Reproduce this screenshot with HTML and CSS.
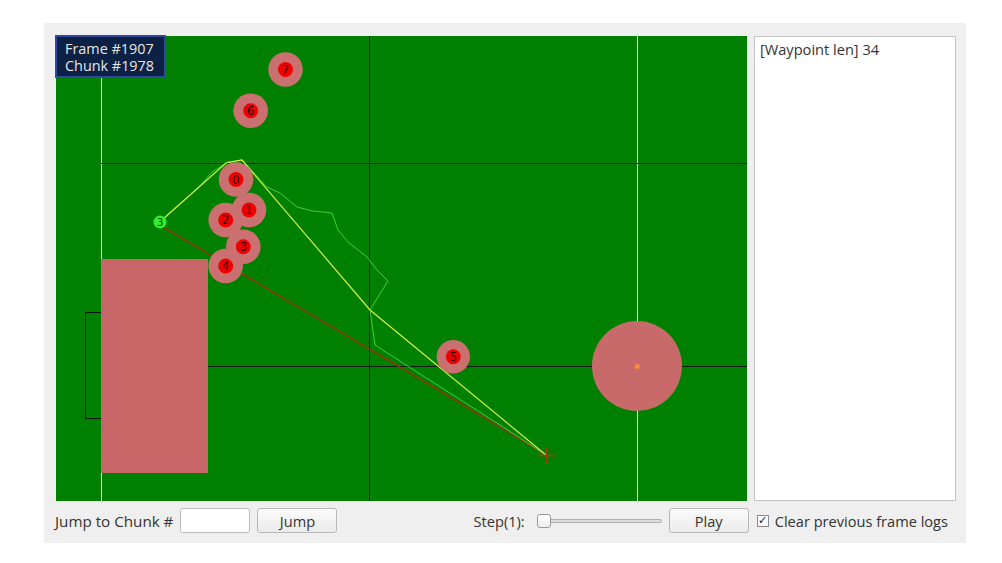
FILE: index.html
```html
<!DOCTYPE html>
<html>
<head>
<meta charset="utf-8">
<link rel="stylesheet" href="styles.css">
</head>
<body>
<div class="window">
  <div class="main">
    <div class="canvas">
      <svg class="field" width="691" height="465" viewBox="56 36 691 465" xmlns="http://www.w3.org/2000/svg">
        <rect x="56" y="36" width="691" height="465" fill="#008000"/>
        <!-- field lines -->
        <line x1="101.5" y1="36" x2="101.5" y2="501" stroke="#e8f8e8" stroke-width="1"/>
        <line x1="637.5" y1="36" x2="637.5" y2="501" stroke="#e8f8e8" stroke-width="1"/>
        <line x1="369.5" y1="36" x2="369.5" y2="501" stroke="#0a1a0a" stroke-width="1"/>
        <line x1="101" y1="163.5" x2="747" y2="163.5" stroke="#0a1a0a" stroke-width="1"/>
        <line x1="101" y1="366.5" x2="747" y2="366.5" stroke="#0a1a0a" stroke-width="1"/>
        <rect x="85.5" y="312.5" width="16" height="106" fill="none" stroke="#0a1a0a" stroke-width="1"/>
        <!-- zones -->
        <rect x="101" y="259" width="107" height="214" fill="#c66666"/>
        <circle cx="637" cy="366" r="45" fill="#c96a6a"/>
        <circle cx="637.3" cy="366.5" r="2.5" fill="#ff8a3a"/>
        <!-- paths -->
        <polyline points="163,227 420,379 500,427 546,455" fill="none" stroke="#8a3a10" stroke-width="1.6"/>
        <polyline points="160,222 200,186 212,172 228,162 242,160 267,187 280,193 297,207 313,211 332,213 338,230 348,242 367,257 377,270 388,281 370,310 375,345 420,374 500,425 546,455" fill="none" stroke="#36d336" stroke-width="1"/>
        <polyline points="163,219 226,163 242,160 370,310 546,455" fill="none" stroke="#d8ee40" stroke-width="1.2"/>
        <!-- target cross -->
        <line x1="538" y1="455.5" x2="555" y2="455.5" stroke="#a83818" stroke-width="1.6"/>
        <line x1="546.5" y1="447" x2="546.5" y2="464" stroke="#a83818" stroke-width="1.6"/>
        <!-- robots -->
        <g class="robots">
          <circle cx="285.5" cy="69.5" r="17.3" fill="#cb7070"/>
          <circle cx="285.5" cy="69.5" r="7.5" fill="#ee0000"/>
          <text x="285.5" y="73.5">7</text>
          <circle cx="250.7" cy="110.7" r="17.3" fill="#cb7070"/>
          <circle cx="250.7" cy="110.7" r="7.5" fill="#ee0000"/>
          <text x="250.7" y="114.7">6</text>
          <circle cx="236" cy="179.5" r="17.3" fill="#cb7070"/>
          <circle cx="249" cy="210" r="17.3" fill="#cb7070"/>
          <circle cx="225.7" cy="220" r="17.3" fill="#cb7070"/>
          <circle cx="243.3" cy="246.7" r="17.3" fill="#cb7070"/>
          <circle cx="225.7" cy="266" r="17.3" fill="#cb7070"/>
          <circle cx="236" cy="179.5" r="7.5" fill="#ee0000"/>
          <text x="236" y="183.5">0</text>
          <circle cx="249" cy="210" r="7.5" fill="#ee0000"/>
          <text x="249" y="214">1</text>
          <circle cx="225.7" cy="220" r="7.5" fill="#ee0000"/>
          <text x="225.7" y="224">2</text>
          <circle cx="243.3" cy="246.7" r="7.5" fill="#ee0000"/>
          <text x="243.3" y="250.7">3</text>
          <circle cx="225.7" cy="266" r="7.5" fill="#ee0000"/>
          <text x="225.7" y="270">4</text>
          <circle cx="453.3" cy="356.7" r="16.7" fill="#cb7070"/>
          <circle cx="453.3" cy="356.7" r="7.5" fill="#ee0000"/>
          <text x="453.3" y="360.7">5</text>
          <circle cx="160" cy="222" r="6.5" fill="#2ef02e"/>
          <text x="160" y="226" class="ball">3</text>
        </g>
      </svg>
      <div class="info">
        <div class="info-line">Frame #1907</div>
        <div class="info-line">Chunk #1978</div>
      </div>
    </div>
    <div class="log">[Waypoint len] 34</div>
  </div>
  <div class="bottom">
    <span class="label first">Jump to Chunk #</span>
    <span class="input"></span>
    <span class="button">Jump</span>
    <span class="label step">Step(1):</span>
    <span class="slider"><span class="groove"></span><span class="handle"></span></span>
    <span class="button">Play</span>
    <span class="check">✓</span>
    <span class="label last">Clear previous frame logs</span>
  </div>
</div>
</body>
</html>
```
FILE: styles.css
```css
html, body {
  margin: 0;
  padding: 0;
  background: #ffffff;
  font-family: "Open Sans", "Noto Sans", "DejaVu Sans", sans-serif;
  font-size: 14.6px;
  color: #333333;
}
.window {
  margin: 23px 0 0 44px;
  width: 922px;
  height: 520px;
  background: #efefef;
  box-sizing: border-box;
  padding: 13px 10px 0 12px;
}
.main {
  display: flex;
  gap: 7px;
  height: 465px;
}
.canvas {
  position: relative;
  width: 691px;
  height: 465px;
}
.field {
  display: block;
}
.robots text {
  font-family: "DejaVu Sans", sans-serif;
  font-size: 11.5px;
  text-anchor: middle;
  fill: #1a0000;
}
.robots text.ball {
  fill: #0a4a0a;
  font-size: 10.5px;
}
.info {
  position: absolute;
  left: -1px;
  top: -1px;
  width: 111px;
  height: 43px;
  box-sizing: border-box;
  background: #0d2145;
  border: 2px solid #3347a0;
  color: #e6e6e6;
  font-size: 14.4px;
  padding: 3px 0 0 8px;
  white-space: nowrap;
  display: flex;
  flex-direction: column;
}
.info-line {
  height: 17px;
  line-height: 17px;
}
.log {
  width: 202px;
  height: 465px;
  box-sizing: border-box;
  background: #ffffff;
  border: 1px solid #c4c4c4;
  padding: 2px 5px;
  font-size: 14.6px;
  color: #333333;
}
.bottom {
  display: flex;
  align-items: center;
  height: 25px;
  margin-top: 7px;
}
.label {
  white-space: nowrap;
}
.label.first {
  margin-left: -1px;
  margin-right: 7px;
  font-size: 15.2px;
}
.input {
  width: 70px;
  height: 25px;
  box-sizing: border-box;
  background: #ffffff;
  border: 1px solid #bcbcbc;
  border-radius: 3px;
  margin-right: 7px;
}
.button {
  width: 80px;
  height: 25px;
  box-sizing: border-box;
  border: 1px solid #b8b8b8;
  border-radius: 3px;
  background: linear-gradient(#fbfbfb, #ebebeb);
  display: flex;
  align-items: center;
  justify-content: center;
  color: #333333;
}
.label.step {
  margin-left: auto;
  margin-right: 12px;
}
.label.last {
  margin-right: 8px;
}
.slider {
  position: relative;
  width: 125px;
  height: 14px;
  margin-right: 7px;
}
.groove {
  position: absolute;
  left: 0;
  right: 0;
  top: 5px;
  height: 4px;
  box-sizing: border-box;
  border: 1px solid #b0b0b0;
  border-radius: 2px;
  background: #dcdcdc;
}
.handle {
  position: absolute;
  left: 0;
  top: 0;
  width: 14px;
  height: 14px;
  box-sizing: border-box;
  border: 1px solid #9a9a9a;
  border-radius: 3px;
  background: linear-gradient(#ffffff, #eeeeee);
}
.check {
  width: 12px;
  height: 12px;
  box-sizing: border-box;
  border: 1px solid #8a8a8a;
  background: #ffffff;
  margin-left: 8px;
  margin-right: 6px;
  font-size: 11px;
  line-height: 10px;
  text-align: center;
  color: #111111;
  font-family: "DejaVu Sans", sans-serif;
}
```
